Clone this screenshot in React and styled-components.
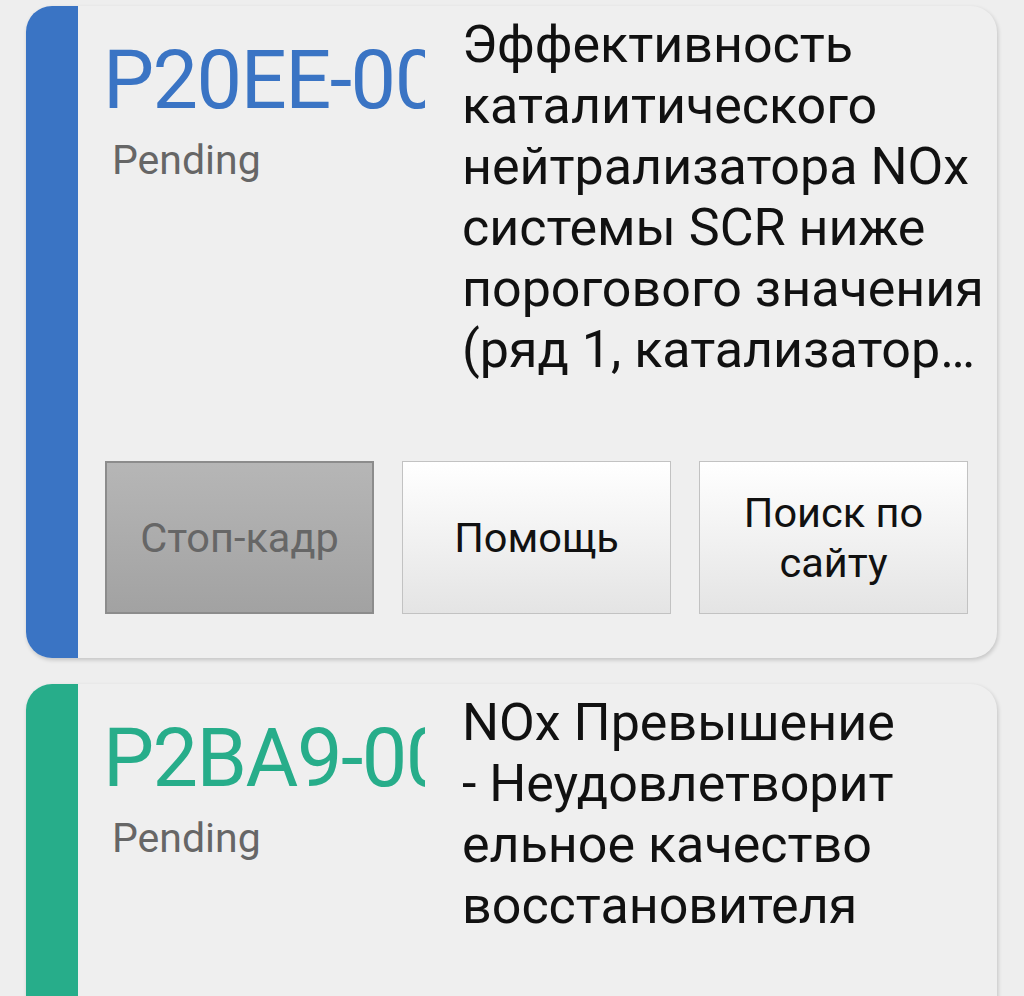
import React from 'react';
import styled, { createGlobalStyle } from 'styled-components';

const GlobalStyle = createGlobalStyle`
  html, body {
    margin: 0;
    background: #eeeeee;
  }
  body {
    font-family: Roboto, "Noto Sans", "Liberation Sans", sans-serif;
  }
`;

const codes = [
    {
        code: 'P20EE-00',
        status: 'Pending',
        color: '#3a74c4',
        text: 'Эффективность каталитического нейтрализатора NOx системы SCR ниже порогового значения (ряд 1, катализатор 1)',
    },
    {
        code: 'P2BA9-00',
        status: 'Pending',
        color: '#27ad8a',
        // строки разбиты так же, как в приложении
        text: 'NOx Превышение\n- Неудовлетворит\nельное качество\nвосстановителя',
    },
];

const List = styled.div`
    display: flex;
    flex-direction: column;
    gap: 26px;
    padding: 6px 27px 0 26px;
`;

const Card = styled.div`
    display: flex;
    background: #efefef;
    border-radius: 26px;
    overflow: hidden;
    box-shadow: 1px 2px 4px rgba(0, 0, 0, 0.18);
`;

const Stripe = styled.div`
    flex: 0 0 52px;
    background: ${(p) => p.$color};
`;

const Body = styled.div`
    flex: 1;
    min-width: 0;
    display: flex;
    flex-direction: column;
    padding: 0 12px 44px 25px;
`;

const Top = styled.div`
    display: flex;
    align-items: flex-start;
`;

const Left = styled.div`
    flex: 0 0 322px;
    overflow: hidden;
    white-space: nowrap;
    padding-top: 27px;
`;

const Code = styled.div`
    font-size: 81px;
    letter-spacing: -1.5px;
    color: ${(p) => p.$color};
`;

const Status = styled.div`
    margin: 8px 0 0 9px;
    font-size: 41px;
    color: #666666;
`;

const Desc = styled.div`
    flex: 1;
    min-width: 0;
    padding: 8px 0 0 37px;
    font-size: 52px;
    line-height: 61px;
    color: #111111;
    white-space: pre-line;
    display: -webkit-box;
    -webkit-box-orient: vertical;
    -webkit-line-clamp: 6;
    overflow: hidden;
`;

const Buttons = styled.div`
    display: grid;
    grid-template-columns: repeat(3, 1fr);
    gap: 28px;
    margin: 81px 17px 0 2px;
`;

const Btn = styled.button`
    height: 153px;
    padding: 0 16px;
    font-family: inherit;
    font-size: 41.5px;
    line-height: 50px;
    color: ${(p) => (p.disabled ? '#666666' : '#111111')};
    background: ${(p) =>
        p.disabled
            ? 'linear-gradient(#b6b6b6, #a2a2a2)'
            : 'linear-gradient(#ffffff, #e4e4e4)'};
    border: ${(p) => (p.disabled ? '2px solid #8c8c8c' : '1px solid #c2c2c2')};
    border-radius: 0;
`;

const CodeCard = ({ item }) => (
    <Card>
        <Stripe $color={item.color} />
        <Body>
            <Top>
                <Left>
                    <Code $color={item.color}>{item.code}</Code>
                    <Status>{item.status}</Status>
                </Left>
                <Desc>{item.text}</Desc>
            </Top>
            <Buttons>
                <Btn disabled>Стоп-кадр</Btn>
                <Btn>Помощь</Btn>
                <Btn>Поиск по сайту</Btn>
            </Buttons>
        </Body>
    </Card>
);

const App = () => (
    <>
        <GlobalStyle />
        <List>
            {codes.map((c) => (
                <CodeCard key={c.code} item={c} />
            ))}
        </List>
    </>
);

export default App;
